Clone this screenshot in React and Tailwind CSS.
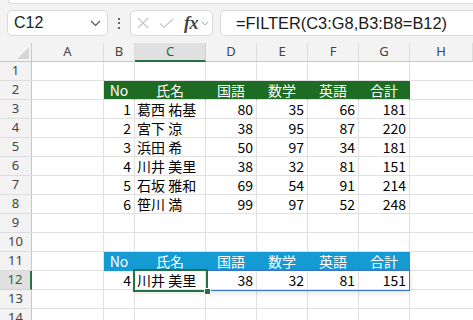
import React from "react";

const HEAD = ["No", "氏名", "国語", "数学", "英語", "合計"];
const WIDTHS = ["w-[31px]", "w-[71px]", "w-[51px]", "w-[51px]", "w-[51px]", "w-[51px]"];
const LETTERS = [
  { l: "A", w: "w-[72px]" },
  { l: "B", w: "w-[31px]" },
  { l: "C", w: "w-[71px]", active: true },
  { l: "D", w: "w-[51px]" },
  { l: "E", w: "w-[51px]" },
  { l: "F", w: "w-[51px]" },
  { l: "G", w: "w-[51px]" },
  { l: "H", w: "w-[63px]" },
];

const ROWS = [
  { n: 1 },
  { n: 2, head: "green" },
  { n: 3, data: [1, "葛西 祐基", 80, 35, 66, 181] },
  { n: 4, data: [2, "宮下 涼", 38, 95, 87, 220] },
  { n: 5, data: [3, "浜田 希", 50, 97, 34, 181] },
  { n: 6, data: [4, "川井 美里", 38, 32, 81, 151] },
  { n: 7, data: [5, "石坂 雅和", 69, 54, 91, 214] },
  { n: 8, data: [6, "笹川 満", 99, 97, 52, 248] },
  { n: 9 },
  { n: 10 },
  { n: 11, head: "blue" },
  { n: 12, data: [4, "川井 美里", 38, 32, 81, 151], sel: true },
  { n: 13 },
  { n: 14 },
];

const cellFont = { fontFamily: '"Noto Sans CJK JP", "Noto Sans", sans-serif' };

function Chevron({ className }) {
  return (
    <svg width="11" height="7" viewBox="0 0 11 7" className={className}>
      <polyline points="1,1 5.5,5.5 10,1" fill="none" stroke="currentColor" strokeWidth="1.2" />
    </svg>
  );
}

function FormulaBar() {
  return (
    <div className="flex items-center h-[26px] mt-[6px] font-['Liberation_Sans',sans-serif]">
      {/* Name box */}
      <div className="ml-[7px] w-[101px] h-full bg-white border border-[#d9d9d9] rounded-[5px] flex items-center pl-[6px] pr-[6px]">
        <span className="text-[16px] text-[#222] flex-1">C12</span>
        <Chevron className="text-[#555]" />
      </div>
      {/* kebab */}
      <div className="w-[22px] h-full flex flex-col items-center justify-center gap-[2.5px]">
        <span className="w-[2px] h-[2px] bg-[#333] rounded-full" />
        <span className="w-[2px] h-[2px] bg-[#333] rounded-full" />
        <span className="w-[2px] h-[2px] bg-[#333] rounded-full" />
      </div>
      {/* cancel / enter / fx */}
      <div className="w-[83px] h-full bg-white border border-[#d9d9d9] rounded-[5px] flex items-center pl-[5px]">
        <svg width="12" height="12" viewBox="0 0 12 12" className="ml-[1px]">
          <line x1="1" y1="1" x2="11" y2="11" stroke="#c4c4c4" strokeWidth="1.1" />
          <line x1="11" y1="1" x2="1" y2="11" stroke="#c4c4c4" strokeWidth="1.1" />
        </svg>
        <svg width="15" height="11" viewBox="0 0 15 11" className="ml-[10px]">
          <polyline points="1,5.5 5,9.5 14,1" fill="none" stroke="#c4c4c4" strokeWidth="1.1" />
        </svg>
        <span className="ml-[10px] text-[18px] italic font-bold text-[#444] font-['Liberation_Serif',serif] leading-none tracking-[-0.5px]">
          fx
        </span>
        <Chevron className="ml-[3px] text-[#9a9a9a] w-[8px]" />
      </div>
      {/* formula */}
      <div className="ml-[7px] flex-1 h-full bg-white border border-r-0 border-[#d9d9d9] rounded-l-[5px] flex items-center pl-[15px]">
        <span className="text-[16.4px] text-[#1a1a1a]">=FILTER(C3:G8,B3:B8=B12)</span>
      </div>
    </div>
  );
}

function HeaderRow() {
  return (
    <div className="flex h-[19px] mt-[7px] font-['Noto_Sans',sans-serif] text-[13px] text-[#444]">
      <div className="w-[32px] shrink-0 relative border-r border-b border-[#c8c8c8]">
        <svg width="12" height="12" viewBox="0 0 12 12" className="absolute right-[2px] bottom-[2px]">
          <polygon points="12,0 12,12 0,12" fill="#d6d6d6" />
        </svg>
      </div>
      {LETTERS.map((c) =>
        c.active ? (
          <div
            key={c.l}
            className={`${c.w} shrink-0 flex items-center justify-center bg-[#e0e0e0] text-[#1e6b3a] border-r border-[#d0d0d0] border-b-2 border-b-[#217346]`}
          >
            {c.l}
          </div>
        ) : (
          <div
            key={c.l}
            className={`${c.w} shrink-0 flex items-center justify-center border-r border-[#dcdcdc] border-b border-b-[#c8c8c8]`}
          >
            {c.l}
          </div>
        )
      )}
    </div>
  );
}

function RowHead({ n, sel }) {
  if (sel) {
    return (
      <div className="w-[32px] shrink-0 flex items-center justify-center bg-[#e0e0e0] text-[#1e6b3a] border-r-2 border-[#217346] border-b border-b-[#d0d0d0] font-['Noto_Sans',sans-serif] text-[13px]">
        {n}
      </div>
    );
  }
  return (
    <div className="w-[32px] shrink-0 flex items-center justify-center bg-[#f3f3f3] text-[#444] border-r border-[#c8c8c8] border-b border-b-[#dcdcdc] font-['Noto_Sans',sans-serif] text-[13px]">
      {n}
    </div>
  );
}

function GridRow({ row }) {
  const { n, head, data, sel } = row;
  return (
    <div className="flex h-[19px] relative" style={cellFont}>
      <RowHead n={n} sel={sel} />
      <div className="w-[72px] shrink-0 bg-white border-r border-b border-[#e1e1e1]" />
      {WIDTHS.map((w, i) => {
        if (head === "green") {
          return (
            <div
              key={i}
              className={`${w} shrink-0 flex items-center justify-center bg-[#1e6c24] text-white text-[14px] border-r border-r-[#1e6c24] border-b border-b-[#e1e1e1]`}
            >
              {HEAD[i]}
            </div>
          );
        }
        if (head === "blue") {
          return (
            <div
              key={i}
              className={`${w} shrink-0 flex items-center justify-center bg-[#149bd4] text-white text-[14px] border-r border-r-[#149bd4] border-b border-b-[#149bd4]`}
            >
              {HEAD[i]}
            </div>
          );
        }
        const v = data ? data[i] : "";
        return (
          <div
            key={i}
            className={`${w} shrink-0 flex items-center bg-white text-[14px] text-black border-r border-b border-[#e1e1e1] ${
              i === 1 ? "justify-start pl-[2px]" : "justify-end pr-[3px]"
            }`}
          >
            {v}
          </div>
        );
      })}
      <div className="w-[63px] shrink-0 bg-white border-b border-[#e1e1e1]" />
      {sel && (
        <>
          <div className="absolute z-10 left-[134px] top-[-1px] w-[276px] h-[21px] border border-[#3a74c6] shadow-[0_2px_5px_rgba(0,0,0,0.12)] pointer-events-none" />
          <div className="absolute z-20 left-[133px] top-[-2px] w-[75px] h-[23px] border-2 border-[#217346] pointer-events-none">
            <div className="absolute right-[-5px] bottom-[-5px] w-[7px] h-[7px] bg-[#217346] border border-white" />
          </div>
        </>
      )}
    </div>
  );
}

export default function App() {
  return (
    <div className="w-[473px] h-[320px] overflow-hidden bg-[#f3f3f3] select-none">
      <div className="ml-[8px] h-[4px] bg-white rounded-bl-[6px] border-l border-b border-[#dadada]" />
      <FormulaBar />
      <HeaderRow />
      <div>
        {ROWS.map((r) => (
          <GridRow key={r.n} row={r} />
        ))}
      </div>
    </div>
  );
}
